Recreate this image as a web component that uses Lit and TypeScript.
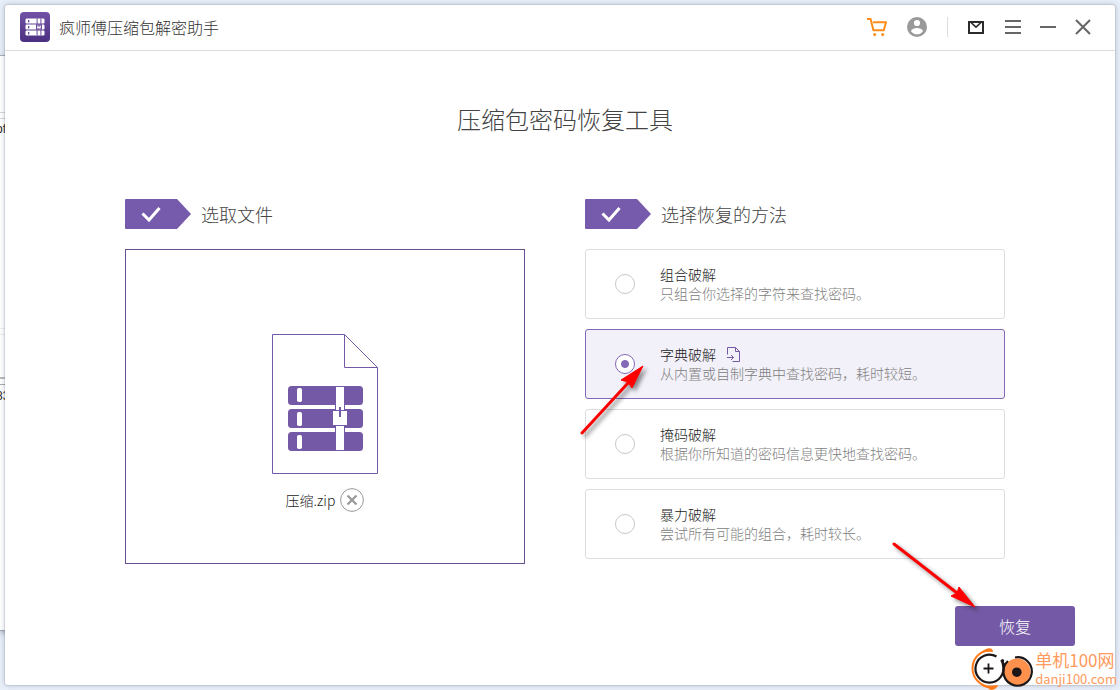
import { LitElement, html, svg, css } from "lit";
import { customElement, property, state } from "lit/decorators.js";

interface Method {
  id: string;
  name: string;
  hint: string;
  importable?: boolean;
}

const METHODS: Method[] = [
  { id: "combo", name: "组合破解", hint: "只组合你选择的字符来查找密码。" },
  { id: "dict", name: "字典破解", hint: "从内置或自制字典中查找密码，耗时较短。", importable: true },
  { id: "mask", name: "掩码破解", hint: "根据你所知道的密码信息更快地查找密码。" },
  { id: "brute", name: "暴力破解", hint: "尝试所有可能的组合，耗时较长。" },
];

const cartIcon = svg`<svg width="20" height="20" viewBox="0 0 20 20" fill="none" stroke="#ff8c1a" stroke-width="2" stroke-linejoin="round">
  <path d="M0 2H3.6L6.4 13.2H16.8L19 5.2H6" />
  <circle cx="7.6" cy="17.4" r="1.5" fill="#ff8c1a" stroke="none" />
  <circle cx="15.6" cy="17.4" r="1.5" fill="#ff8c1a" stroke="none" />
</svg>`;
const userIcon = svg`<svg width="20" height="20" viewBox="0 0 20 20">
  <circle cx="10" cy="10" r="10" fill="#999" />
  <circle cx="10" cy="6" r="3.1" fill="#fff" />
  <path d="M4 14.2C4.3 11.8 8 10.9 10 10.9S15.7 11.8 16 14.2C14.6 16.2 12.4 17.3 10 17.3S5.4 16.2 4 14.2Z" fill="#fff" />
</svg>`;
const mailIcon = svg`<svg width="20" height="20" viewBox="0 0 20 20" fill="none" stroke="#2b2b2b">
  <rect x="1" y="5" width="14" height="11" stroke-width="2" />
  <path d="M3 5.5L8 10.2L13 5.5" stroke-width="1.6" />
</svg>`;
const menuIcon = svg`<svg width="20" height="20" viewBox="0 0 20 20" stroke="#666" stroke-width="2">
  <path d="M2 4H18M2 10H18M2 16H18" />
</svg>`;
const minIcon = svg`<svg width="20" height="20" viewBox="0 0 20 20" stroke="#666" stroke-width="2">
  <path d="M2 10H18" />
</svg>`;
const closeIcon = svg`<svg width="20" height="20" viewBox="0 0 20 20" stroke="#666" stroke-width="2">
  <path d="M3 3L17 17M17 3L3 17" />
</svg>`;
const logoIcon = svg`<svg width="30" height="30" viewBox="0 0 30 30">
  <defs>
    <linearGradient id="tile" x1="0" y1="0" x2="0" y2="1">
      <stop offset="0" stop-color="#7252a6" /><stop offset="1" stop-color="#4b2f80" />
    </linearGradient>
  </defs>
  <rect width="30" height="30" rx="4" fill="url(#tile)" />
  <g fill="#fff">
    <rect x="5.5" y="6.5" width="19" height="5" rx="1.2" />
    <rect x="5.5" y="12.5" width="19" height="5" rx="1.2" />
    <rect x="5.5" y="18.5" width="19" height="5" rx="1.2" />
  </g>
  <g fill="#6a4a9c">
    <rect x="8" y="8" width="1.3" height="2.4" /><rect x="8" y="14" width="1.3" height="2.4" /><rect x="8" y="20" width="1.3" height="2.4" />
    <path d="M16.6 6.5H17.6V12.2H16.6ZM20.4 6.5H21.4V12.2H20.4ZM16.6 18H17.6V23.5H16.6ZM20.4 18H21.4V23.5H20.4Z" />
    <path d="M16 12.3H22V17.8H16ZM17.2 13.4V16.6H20.8V13.4H19.5V15H18.5V13.4Z" fill-rule="evenodd" />
  </g>
</svg>`;
const archiveIcon = svg`<svg width="106" height="140" viewBox="0 0 106 140">
  <path d="M0.5 0.5H72.5L105.5 33.5V139.5H0.5ZM72.5 0.5V33.5H105.5" fill="#fff" stroke="#745aa6" />
  <g fill="#745aa6">
    <rect x="16" y="52" width="75" height="19" rx="3.5" />
    <rect x="16" y="75" width="75" height="19" rx="3.5" />
    <rect x="16" y="98" width="75" height="19" rx="3.5" />
    <rect x="63" y="52" width="10" height="65" />
    <rect x="60" y="76" width="16" height="16" />
  </g>
  <g fill="#fff">
    <rect x="25" y="54" width="5" height="14" rx="1.8" />
    <rect x="25" y="78" width="5" height="14" rx="1.8" />
    <rect x="25" y="101" width="5" height="14" rx="1.8" />
    <rect x="64" y="53" width="8" height="23" />
    <rect x="64" y="92" width="8" height="24" />
    <rect x="61" y="77" width="14" height="14" />
  </g>
  <rect x="67" y="73" width="2" height="10" fill="#745aa6" />
</svg>`;
const importIcon = svg`<svg width="13" height="15" viewBox="0 0 13 15" fill="none" stroke="#745aa6">
  <path d="M0.5 7.5V0.5H8.5L12.5 4.5V14.5H5.5M8.5 0.5V4.5H12.5M0 10.5H6.5M4 8L6.5 10.5L4 13" />
</svg>`;
const checkIcon = svg`<svg width="66" height="30" viewBox="0 0 66 30">
  <path d="M1 0H52L66 15L52 30H1Q0 30 0 29V1Q0 0 1 0Z" fill="#765aab" />
  <path d="M17.5 14.5L24 21L34.5 9" fill="none" stroke="#fff" stroke-width="3" />
</svg>`;
const removeIcon = svg`<svg width="24" height="24" viewBox="0 0 24 24" fill="none" stroke="#999">
  <circle cx="12" cy="12" r="11.4" />
  <path d="M7.5 7.5L16.5 16.5M16.5 7.5L7.5 16.5" stroke-width="2.2" />
</svg>`;

@customElement("desktop-backdrop")
class DesktopBackdrop extends LitElement {
  static styles = css`
    :host {
      position: absolute;
      inset: 0;
      overflow: hidden;
      background: linear-gradient(#e8eef8, #e3e9f7 50%, #e9eff9);
    }
    .pane {
      position: absolute;
      left: 0;
      top: 55px;
      width: 40px;
      bottom: 59px;
      background: #fff;
      border-top: 1px solid #a9adb8;
      border-bottom: 1px solid #a0a4ac;
      box-shadow: 0 2px 6px rgba(60, 70, 90, 0.4);
      font: 12px/16px "Liberation Sans", sans-serif;
      color: #222;
    }
    .rows {
      position: absolute;
      left: 0;
      width: 40px;
      top: 56px;
      height: 5px;
      border: solid #d6d6d6;
      border-width: 1px 0;
    }
    .low { top: 272px; border-color: #ececec; }
    .bar { top: 321px; height: 2px; border: 0; background: #bbb; }
    .line { top: 328px; height: 1px; border: 0; background: #aaa; }
    .a { position: absolute; left: -4px; top: 65px; }
    .b { position: absolute; left: -4px; top: 332px; }
  `;
  render() {
    return html`<div class="pane">
      <div class="rows"></div>
      <div class="rows low"></div>
      <div class="rows bar"></div>
      <div class="rows line"></div>
      <span class="a">of</span><span class="b">83</span>
    </div>`;
  }
}

@customElement("title-bar")
class TitleBar extends LitElement {
  static styles = css`
    :host {
      display: flex;
      align-items: center;
      height: 43px;
      padding: 0 22px 2px 15px;
      border-bottom: 1px solid #dcdcdc;
    }
    .logo { display: flex; }
    .name {
      flex: 1;
      margin: 0 0 0 9px;
      font-size: 16px;
      line-height: 24px;
      font-weight: 300;
      color: #333;
    }
    .group { display: flex; align-items: center; gap: 20px; }
    .tools { gap: 15px; }
    .rule { width: 1px; height: 20px; background: #ddd; }
    button {
      display: flex;
      padding: 0;
      border: 0;
      background: none;
      cursor: pointer;
    }
  `;
  render() {
    return html`
      <span class="logo">${logoIcon}</span>
      <h1 class="name">疯师傅压缩包解密助手</h1>
      <div class="group">
        <button aria-label="购买">${cartIcon}</button>
        <button aria-label="账户">${userIcon}</button>
        <span class="rule"></span>
        <div class="group tools">
          <button aria-label="反馈">${mailIcon}</button>
          <button aria-label="菜单">${menuIcon}</button>
          <button aria-label="最小化">${minIcon}</button>
          <button aria-label="关闭">${closeIcon}</button>
        </div>
      </div>
    `;
  }
}

@customElement("step-heading")
class StepHeading extends LitElement {
  static styles = css`
    :host { display: flex; align-items: center; gap: 10px; height: 30px; }
    svg { display: block; }
    h3 {
      margin: 0;
      font-size: 18px;
      line-height: 30px;
      font-weight: 300;
      color: #444;
    }
  `;
  @property() text = "";
  render() {
    return html`${checkIcon}<h3>${this.text}</h3>`;
  }
}

@customElement("site-mark")
class SiteMark extends LitElement {
  static styles = css`
    :host {
      position: absolute;
      right: 3px;
      bottom: 0;
      display: flex;
      align-items: center;
      color: #ff9a5c;
      font-weight: 400;
    }
    svg { display: block; }
    .words { display: flex; flex-direction: column; }
    .cn { font-size: 17px; line-height: 20px; }
    .en { font-size: 13px; line-height: 18px; }
  `;
  render() {
    return html`
      <svg width="64" height="42" viewBox="0 0 64 42" fill="none">
        <path d="M17 2C8 4 1.500 11 1.500 20.500C1.500 30 9 38 20 39.500" stroke="#ff7a1a" stroke-width="2" />
        <path d="M9 5.500Q16 -1 20 0.500Q23 2.500 21.500 4Q15 3 9 5.500ZM10 37Q17 38.500 27 37Q26 41 21 42Q18 42 17 40Q13 39.500 10 37Z" fill="#ff7a1a" />
        <circle cx="46" cy="24" r="13.500" fill="#ff914d" />
        <path d="M25.500 8.500A14 14 0 1 0 32 17Q31 13 32.500 11.500" stroke="#1c1618" stroke-width="2.200" />
        <path d="M44 9.500A14.200 14.200 0 1 1 37 13M30 12Q34 16 32.500 22" stroke="#1c1618" stroke-width="2.200" />
        <path d="M12.500 20.500H22.500M17.500 15.500V25.500" stroke="#1c1618" stroke-width="1.800" />
        <circle cx="45.800" cy="24.200" r="4.800" fill="#1c1618" />
      </svg>
      <div class="words"><span class="cn">单机100网</span><span class="en">danji100.com</span></div>
    `;
  }
}

@customElement("app-root")
class AppRoot extends LitElement {
  static styles = css`
    :host {
      position: relative;
      display: flex;
      box-sizing: border-box;
      min-height: 100vh;
      padding: 5px;
      overflow: hidden;
      font-family: "Noto Sans CJK SC", sans-serif;
      font-weight: 300;
      color: #222;
    }
    .window {
      position: relative;
      flex: 1;
      display: flex;
      flex-direction: column;
      background: #fff;
      border-radius: 3px;
      box-shadow: 0 0 0 1px rgba(90, 100, 120, 0.1), 0 0 5px rgba(70, 80, 100, 0.35);
    }
    .body {
      flex: 1;
      display: flex;
      flex-direction: column;
      padding: 50px 40px 39px 120px;
    }
    .title {
      margin: 0 70px 62px 0;
      font-size: 24px;
      line-height: 36px;
      font-weight: 300;
      text-align: center;
      color: #444;
    }
    .steps {
      display: grid;
      grid-template-columns: 20fr 21fr;
      column-gap: 60px;
      margin-right: 70px;
    }
    .step { display: flex; flex-direction: column; gap: 20px; }
    .file {
      flex: 1;
      display: flex;
      flex-direction: column;
      align-items: center;
      justify-content: center;
      gap: 14px;
      box-sizing: border-box;
      min-height: 315px;
      padding-top: 32px;
      border: 1px solid #66508f;
    }
    .file-row {
      display: flex;
      align-items: center;
      gap: 5px;
      font-size: 14px;
      line-height: 24px;
    }
    .file svg, .import svg { display: block; }
    button { font: inherit; cursor: pointer; }
    .remove, .import { padding: 0; border: 0; background: none; }
    .methods {
      display: flex;
      flex-direction: column;
      gap: 10px;
      margin: 0;
      padding: 0;
      border: 0;
      min-width: 0;
    }
    .card {
      position: relative;
      display: flex;
      align-items: center;
      gap: 25px;
      box-sizing: border-box;
      min-height: 70px;
      padding: 0 29px;
      border: 1px solid #dedede;
      border-radius: 3px;
      font-size: 14px;
      line-height: 19px;
    }
    .card.on { z-index: 1; border-color: #8468b8; background: #f2f0f8; }
    .radio {
      appearance: none;
      flex: none;
      width: 20px;
      height: 20px;
      margin: 0;
      border: 1px solid #c8c8c8;
      border-radius: 50%;
      background: #fff;
    }
    .radio:checked {
      border-color: #8468b8;
      background: radial-gradient(circle, #8468b8 3.5px, #fff 4.5px);
    }
    .name { display: flex; align-items: center; gap: 11px; }
    .hint { color: #808080; }
    .footer { display: flex; justify-content: flex-end; margin-top: auto; }
    .start { position: relative; }
    .recover {
      display: block;
      width: 120px;
      height: 40px;
      padding: 0;
      border: 0;
      border-radius: 3px;
      background: #745aa6;
      color: #fff;
      font-size: 16px;
    }
    .arrow {
      position: absolute;
      pointer-events: none;
      overflow: visible;
      filter: drop-shadow(3px 3px 2px rgba(0, 0, 0, 0.45));
    }
    .to-card { left: -6px; top: 35px; }
    .to-button { right: 99px; bottom: 38px; }
  `;

  @state() private chosen = "dict";

  private card(m: Method) {
    const on = m.id === this.chosen;
    return html`<div class="card ${on ? "on" : ""}">
      <input class="radio" type="radio" name="method" id=${m.id} .checked=${on} @change=${() => (this.chosen = m.id)} />
      <div>
        <div class="name">
          <label for=${m.id}>${m.name}</label>
          ${m.importable ? html`<button class="import" aria-label="导入字典">${importIcon}</button>` : ""}
        </div>
        <div class="hint">${m.hint}</div>
      </div>
      ${m.importable
        ? html`<svg class="arrow to-card" width="64" height="70" viewBox="0 0 64 70">
            <path d="M2 68L48 18" stroke="#fe0000" stroke-width="3" stroke-linecap="round" />
            <path d="M63 1L41 15L48 17L52 23Z" fill="#fe0000" stroke="#fe0000" />
          </svg>`
        : ""}
    </div>`;
  }

  render() {
    return html`
      <desktop-backdrop aria-hidden="true"></desktop-backdrop>
      <div class="window">
        <title-bar></title-bar>
        <main class="body">
          <h2 class="title">压缩包密码恢复工具</h2>
          <div class="steps">
            <section class="step">
              <step-heading text="选取文件"></step-heading>
              <div class="file">
                ${archiveIcon}
                <div class="file-row">
                  <span>压缩.zip</span>
                  <button class="remove" aria-label="移除文件">${removeIcon}</button>
                </div>
              </div>
            </section>
            <section class="step">
              <step-heading text="选择恢复的方法"></step-heading>
              <fieldset class="methods" aria-label="选择恢复的方法">${METHODS.map((m) => this.card(m))}</fieldset>
            </section>
          </div>
          <div class="footer">
            <div class="start">
              <button class="recover">恢复</button>
              <svg class="arrow to-button" width="84" height="66" viewBox="0 0 84 66">
                <path d="M2 2L65 51" stroke="#fe0000" stroke-width="3" stroke-linecap="round" />
                <path d="M83 65L67 45L65 51L59 54Z" fill="#fe0000" stroke="#fe0000" />
              </svg>
            </div>
          </div>
        </main>
      </div>
      <site-mark></site-mark>
    `;
  }
}
